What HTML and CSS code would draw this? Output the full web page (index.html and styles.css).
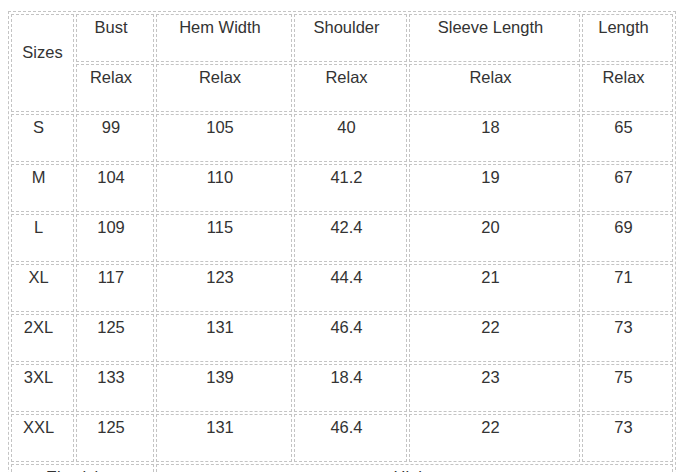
FILE: index.html
```html
<!DOCTYPE html>
<html lang="en">
<head>
<meta charset="utf-8">
<title>Size Chart</title>
<link rel="stylesheet" href="styles.css">
</head>
<body>
<div class="chart">
<table class="size-table">
<colgroup>
<col class="c1"><col class="c2"><col class="c3"><col class="c4"><col class="c5"><col class="c6">
</colgroup>
<tbody>
<tr><td rowspan="2" class="sizes-head">Sizes</td><td>Bust</td><td>Hem Width</td><td>Shoulder</td><td>Sleeve Length</td><td>Length</td></tr>
<tr><td>Relax</td><td>Relax</td><td>Relax</td><td>Relax</td><td>Relax</td></tr>
<tr><td>S</td><td>99</td><td>105</td><td>40</td><td>18</td><td>65</td></tr>
<tr><td>M</td><td>104</td><td>110</td><td>41.2</td><td>19</td><td>67</td></tr>
<tr><td>L</td><td>109</td><td>115</td><td>42.4</td><td>20</td><td>69</td></tr>
<tr><td>XL</td><td>117</td><td>123</td><td>44.4</td><td>21</td><td>71</td></tr>
<tr><td>2XL</td><td>125</td><td>131</td><td>46.4</td><td>22</td><td>73</td></tr>
<tr><td>3XL</td><td>133</td><td>139</td><td>18.4</td><td>23</td><td>75</td></tr>
<tr><td>XXL</td><td>125</td><td>131</td><td>46.4</td><td>22</td><td>73</td></tr>
<tr><td colspan="2">Elasticity</td><td colspan="4">High</td></tr>
</tbody>
</table>
</div>
</body>
</html>
```
FILE: styles.css
```css
html, body {
  background: #ffffff;
}
body {
  margin: 8px;
  font-family: "Liberation Sans", Arial, sans-serif;
  color: #333333;
}
.chart {
  padding-top: 3px;
}
.size-table {
  width: 668px;
  box-sizing: border-box;
  table-layout: fixed;
  border-collapse: separate;
  border-spacing: 2px;
  border: 1px dashed #c4c4c4;
}
.c1 { width: 63px; }
.c2 { width: 78px; }
.c3 { width: 136px; }
.c4 { width: 113px; }
.c5 { width: 171px; }
.c6 { width: 91px; }
.size-table td {
  border: 1px dashed #c4c4c4;
  padding: 3px 12px 25px 4px;
  font-size: 16.5px;
  line-height: 18px;
  text-align: center;
  vertical-align: middle;
  white-space: nowrap;
}
.size-table td.sizes-head {
  padding-left: 4px;
  padding-right: 4px;
}
```
